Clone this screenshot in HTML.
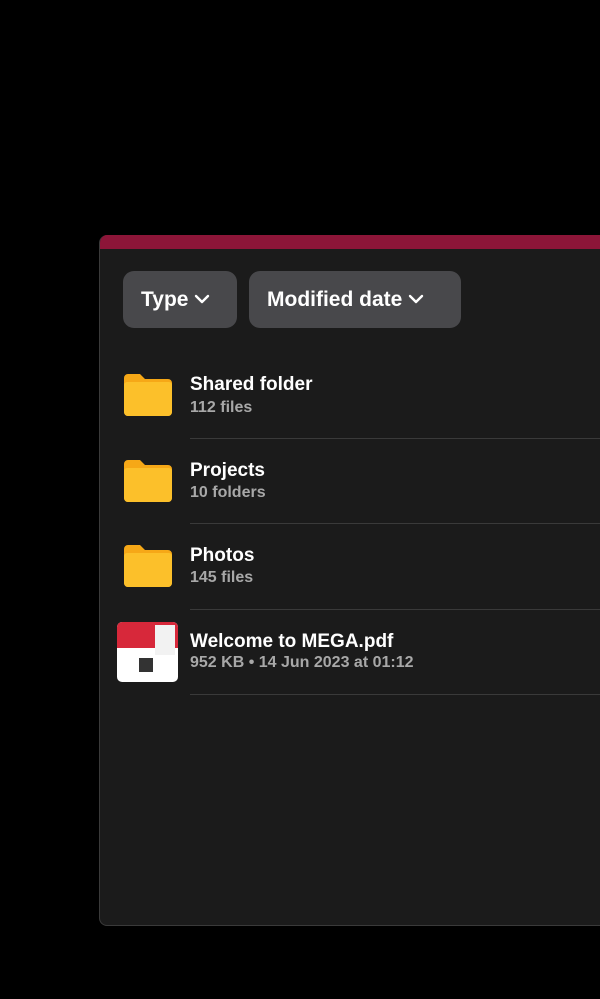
<!DOCTYPE html>
<html><head><meta charset="utf-8"><style>
html,body{margin:0;padding:0;background:#000;width:600px;height:999px;overflow:hidden;font-family:"Liberation Sans",sans-serif}
.panel{position:absolute;left:99px;top:235px;width:520px;height:690px;background:#1b1b1b;border:1px solid #3a3a3a;border-top:none;border-radius:8px 0 0 8px;overflow:hidden}
.bar{height:14px;background:#8c1538}
.btn{position:absolute;top:36px;height:57px;background:#48484b;border-radius:11px;color:#fff;font-weight:bold;font-size:21px;line-height:57px;padding:0 18px;box-sizing:border-box}
.btn svg{vertical-align:middle;margin-left:6px;margin-top:-3px}
.row{position:absolute;left:0;width:520px;height:85px}
.folder{position:absolute;left:24px;top:140px}
.t{position:absolute;left:90px;color:#fff;font-weight:bold;font-size:19px}
.s{position:absolute;left:90px;color:#a8a8a8;font-size:16px;font-weight:bold}
.sep{position:absolute;left:90px;right:0;height:1px;background:#3a3a3a}
</style></head><body>
<div class="panel">
<div class="bar"></div>
<div class="btn" style="left:23px;width:114px">Type<svg width="16" height="10" viewBox="0 0 16 10"><path d="M2 2l6 6 6-6" stroke="#fff" stroke-width="2.4" fill="none" stroke-linecap="round" stroke-linejoin="round"/></svg></div>
<div class="btn" style="left:149px;width:212px">Modified date<svg width="16" height="10" viewBox="0 0 16 10"><path d="M2 2l6 6 6-6" stroke="#fff" stroke-width="2.4" fill="none" stroke-linecap="round" stroke-linejoin="round"/></svg></div>

<svg style="position:absolute;left:24px;top:139px" width="48" height="42" viewBox="0 0 48 42"><path d="M0 4a4 4 0 0 1 4-4h12l5 5h23a4 4 0 0 1 4 4v29a4 4 0 0 1-4 4H4a4 4 0 0 1-4-4z" fill="#f6a817"/><path d="M0 11a3 3 0 0 1 3-3h42a3 3 0 0 1 3 3v27a4 4 0 0 1-4 4H4a4 4 0 0 1-4-4z" fill="#fcc02a"/></svg>
<div class="t" style="top:139px">Shared folder</div>
<div class="s" style="top:164px">112 files</div>
<div class="sep" style="top:203px"></div>

<svg style="position:absolute;left:24px;top:225px" width="48" height="42" viewBox="0 0 48 42"><path d="M0 4a4 4 0 0 1 4-4h12l5 5h23a4 4 0 0 1 4 4v29a4 4 0 0 1-4 4H4a4 4 0 0 1-4-4z" fill="#f6a817"/><path d="M0 11a3 3 0 0 1 3-3h42a3 3 0 0 1 3 3v27a4 4 0 0 1-4 4H4a4 4 0 0 1-4-4z" fill="#fcc02a"/></svg>
<div class="t" style="top:225px">Projects</div>
<div class="s" style="top:249px">10 folders</div>
<div class="sep" style="top:288px"></div>

<svg style="position:absolute;left:24px;top:310px" width="48" height="42" viewBox="0 0 48 42"><path d="M0 4a4 4 0 0 1 4-4h12l5 5h23a4 4 0 0 1 4 4v29a4 4 0 0 1-4 4H4a4 4 0 0 1-4-4z" fill="#f6a817"/><path d="M0 11a3 3 0 0 1 3-3h42a3 3 0 0 1 3 3v27a4 4 0 0 1-4 4H4a4 4 0 0 1-4-4z" fill="#fcc02a"/></svg>
<div class="t" style="top:310px">Photos</div>
<div class="s" style="top:334px">145 files</div>
<div class="sep" style="top:374px"></div>

<div style="position:absolute;left:17px;top:387px;width:61px;height:60px;border-radius:5px;background:#fff;overflow:hidden">
<div style="height:26px;background:#d7283a"></div>
<div style="position:absolute;left:38px;top:3px;width:20px;height:30px;background:#f2f2f2"></div>
<div style="position:absolute;left:22px;top:36px;width:14px;height:14px;background:#333"></div>
</div>
<div class="t" style="top:396px">Welcome to MEGA.pdf</div>
<div class="s" style="top:419px">952 KB • 14 Jun 2023 at 01:12</div>
<div class="sep" style="top:459px"></div>
</div>
</body></html>
